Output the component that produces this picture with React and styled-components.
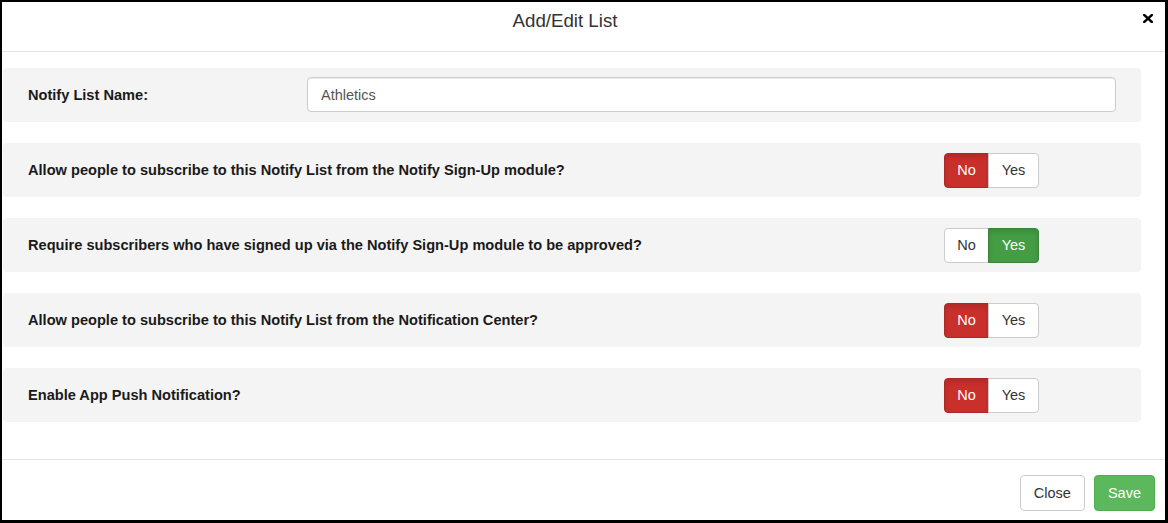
import React from "react";
import styled, { createGlobalStyle } from "styled-components";

const GlobalStyle = createGlobalStyle`
  html, body {
    margin: 0;
    padding: 0;
    background: #000;
  }
  body {
    font-family: "Liberation Sans", Arial, sans-serif;
    font-size: 14px;
    color: #333;
  }
  * { box-sizing: border-box; }
`;

const Modal = styled.div`
  width: 1168px;
  height: 523px;
  background: #fff;
  border-style: solid;
  border-color: #000;
  border-width: 2px 3px 3px 2px;
  display: flex;
  flex-direction: column;
`;

const Header = styled.div`
  height: 50px;
  padding: 6px 37px 0 0;
  border-bottom: 1px solid #e5e5e5;
  position: relative;
  text-align: center;
`;

const Title = styled.h4`
  margin: 0;
  font-size: 18.7px;
  font-weight: normal;
  line-height: 26px;
  color: #333;
`;

const CloseX = styled.button`
  position: absolute;
  top: 10px;
  right: 11px;
  width: 12px;
  height: 12px;
  padding: 0;
  border: 0;
  background: none;
  cursor: pointer;
  display: flex;
  align-items: center;
  justify-content: center;
`;

const Body = styled.div`
  flex: 1;
  padding: 16px 24px 0 1px;
  display: flex;
  flex-direction: column;
  gap: 21px;
`;

const Row = styled.div`
  height: 54px;
  background: #f4f4f4;
  border-radius: 4px;
  display: flex;
  align-items: center;
  padding-left: 25px;
`;

const Label = styled.div`
  font-weight: bold;
  font-size: 14.6px;
  color: #1a1a1a;
  width: ${(p) => (p.$fixed ? "279px" : "auto")};
  flex: ${(p) => (p.$fixed ? "none" : "1")};
`;

const TextInput = styled.input`
  flex: 1;
  height: 35px;
  margin: -1px 25px 0 0;
  padding: 6px 13px;
  border: 1px solid #ccc;
  border-radius: 4px;
  background: #fff;
  font-family: inherit;
  font-size: 14.5px;
  color: #555;
  outline: none;
  box-shadow: inset 0 1px 1px rgba(0, 0, 0, 0.075);
`;

const Toggle = styled.div`
  display: flex;
  margin-right: 102px;
`;

const ToggleBtn = styled.button`
  height: 35px;
  padding: 0 12px;
  font-family: inherit;
  font-size: 14.5px;
  line-height: 20px;
  cursor: pointer;
  border: 1px solid ${(p) => (p.$on ? (p.$tone === "no" ? "#ac2925" : "#398439") : "#ccc")};
  background: ${(p) => (p.$on ? (p.$tone === "no" ? "#c9302c" : "#449d44") : "#fff")};
  color: ${(p) => (p.$on ? "#fff" : "#333")};
  box-shadow: ${(p) => (p.$on ? "inset 0 3px 5px rgba(0,0,0,0.125)" : "none")};
  border-radius: ${(p) => (p.$first ? "4px 0 0 4px" : "0 4px 4px 0")};
  margin-left: ${(p) => (p.$first ? "0" : "-1px")};
  min-width: ${(p) => (p.$first ? "45px" : "51px")};
`;

const Footer = styled.div`
  border-top: 1px solid #e5e5e5;
  padding: 15px 10px 0 0;
  height: 61px;
  display: flex;
  justify-content: flex-end;
  gap: 9px;
`;

const FooterBtn = styled.button`
  height: 36px;
  padding: 0 13px;
  font-family: inherit;
  font-size: 14.5px;
  border-radius: 4px;
  cursor: pointer;
  border: 1px solid ${(p) => (p.$primary ? "#4cae4c" : "#ccc")};
  background: ${(p) => (p.$primary ? "#5cb85c" : "#fff")};
  color: ${(p) => (p.$primary ? "#fff" : "#333")};
`;

const questions = [
  { text: "Allow people to subscribe to this Notify List from the Notify Sign-Up module?", value: false },
  { text: "Require subscribers who have signed up via the Notify Sign-Up module to be approved?", value: true },
  { text: "Allow people to subscribe to this Notify List from the Notification Center?", value: false },
  { text: "Enable App Push Notification?", value: false },
];

const YesNo = ({ value }) => (
  <Toggle>
    <ToggleBtn $first $tone="no" $on={!value}>No</ToggleBtn>
    <ToggleBtn $tone="yes" $on={value}>Yes</ToggleBtn>
  </Toggle>
);

export default function App() {
  return (
    <>
      <GlobalStyle />
      <Modal>
        <Header>
          <Title>Add/Edit List</Title>
          <CloseX aria-label="Close">
            <svg width="10" height="9" viewBox="0 0 10 9">
              <path d="M1.2 1 L8.8 8 M8.8 1 L1.2 8" stroke="#000" strokeWidth="2.4" strokeLinecap="square" />
            </svg>
          </CloseX>
        </Header>
        <Body>
          <Row>
            <Label $fixed>Notify List Name:</Label>
            <TextInput defaultValue="Athletics" />
          </Row>
          {questions.map((q) => (
            <Row key={q.text}>
              <Label>{q.text}</Label>
              <YesNo value={q.value} />
            </Row>
          ))}
        </Body>
        <Footer>
          <FooterBtn>Close</FooterBtn>
          <FooterBtn $primary>Save</FooterBtn>
        </Footer>
      </Modal>
    </>
  );
}
